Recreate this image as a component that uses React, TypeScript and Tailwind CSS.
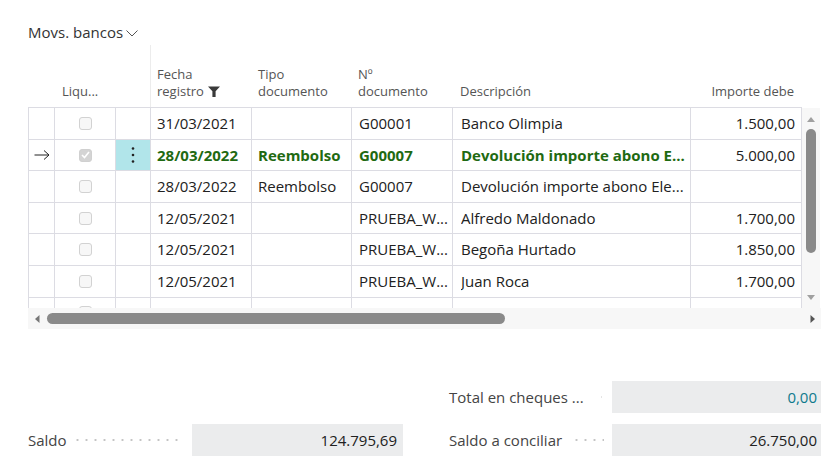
import React from 'react';

type Row = {
  arrow?: boolean;
  checked?: boolean;
  active?: boolean;
  fecha: string;
  tipo: string;
  doc: string;
  desc: string;
  importe: string;
  h: string;
};

const rows: Row[] = [
  { fecha: '31/03/2021', tipo: '', doc: 'G00001', desc: 'Banco Olimpia', importe: '1.500,00', h: 'h-[32px]' },
  { arrow: true, checked: true, active: true, fecha: '28/03/2022', tipo: 'Reembolso', doc: 'G00007', desc: 'Devolución importe abono E...', importe: '5.000,00', h: 'h-[31px]' },
  { fecha: '28/03/2022', tipo: 'Reembolso', doc: 'G00007', desc: 'Devolución importe abono Ele...', importe: '', h: 'h-[32px]' },
  { fecha: '12/05/2021', tipo: '', doc: 'PRUEBA_W...', desc: 'Alfredo Maldonado', importe: '1.700,00', h: 'h-[31px]' },
  { fecha: '12/05/2021', tipo: '', doc: 'PRUEBA_W...', desc: 'Begoña Hurtado', importe: '1.850,00', h: 'h-[32px]' },
  { fecha: '12/05/2021', tipo: '', doc: 'PRUEBA_W...', desc: 'Juan Roca', importe: '1.700,00', h: 'h-[32px]' },
];

const cols = 'grid grid-cols-[27px_61px_35px_101px_100px_101px_238px_111px]';
const cell = 'border-r border-b border-[#dcdce3] overflow-hidden whitespace-nowrap';

const Checkbox = ({ checked }: { checked?: boolean }) =>
  checked ? (
    <div className="w-[13px] h-[13px] rounded-[3px] bg-[#d4d4d4] border border-[#d0d0d0] flex items-center justify-center">
      <svg width="9" height="8" viewBox="0 0 9 8">
        <polyline points="1,4 3.5,6.5 8,1" fill="none" stroke="#fff" strokeWidth="1.6" />
      </svg>
    </div>
  ) : (
    <div className="w-[13px] h-[13px] rounded-[3px] bg-[#f7f7f7] border border-[#d2d2d2]" />
  );

const Dots = ({ width, className }: { width: string; className: string }) => (
  <div
    className={`${width} h-[4px] bg-[radial-gradient(circle,#c4c4c4_0.9px,transparent_1.3px)] bg-[length:9px_4px] bg-repeat-x ${className}`}
  />
);

export default function App() {
  return (
    <div className="w-[821px] h-[465px] bg-white overflow-hidden font-['Open_Sans',sans-serif] text-[#212121]">
      <div className="pt-[22px] pl-[28px] flex items-center gap-[3px] text-[15px] leading-[21px] text-[#333]">
        <span>Movs. bancos</span>
        <svg width="12" height="7" viewBox="0 0 12 7" className="mt-[2px]">
          <polyline points="0.5,0.5 6,6 11.5,0.5" fill="none" stroke="#555" strokeWidth="1" />
        </svg>
      </div>

      <div className="ml-[28px] mt-[2px] flex">
        <div className="w-[774px] h-[263px] overflow-hidden">
          <div className={`${cols} h-[63px] border-b border-[#dcdce3] text-[13px] leading-[17px] text-[#555]`}>
            <div />
            <div className="flex items-end pb-[7px] pl-[7px]">Liqu...</div>
            <div className="border-r border-[#ececec]" />
            <div className="flex items-end pb-[7px] pl-[6px]">
              <div>
                Fecha
                <br />
                <span className="inline-flex items-center gap-[4px]">
                  registro
                  <svg width="12" height="11" viewBox="0 0 12 11">
                    <path d="M0 0.5h12L7.6 5.2V11H4.4V5.2z" fill="#3a3a3a" />
                  </svg>
                </span>
              </div>
            </div>
            <div className="flex items-end pb-[7px] pl-[6px]">
              <div>
                Tipo
                <br />
                documento
              </div>
            </div>
            <div className="flex items-end pb-[7px] pl-[6px]">
              <div>
                Nº
                <br />
                documento
              </div>
            </div>
            <div className="flex items-end pb-[7px] pl-[7px]">Descripción</div>
            <div className="flex items-end justify-end pb-[7px] pr-[8px]">Importe debe</div>
          </div>

          {rows.map((r, i) => {
            const txt = r.active ? 'font-bold text-[#1f6a12]' : '';
            return (
              <div key={i} className={`${cols} ${r.h} text-[15px]`}>
                <div className={`${cell} border-l flex items-center justify-center`}>
                  {r.arrow && (
                    <svg width="16" height="10" viewBox="0 0 16 10">
                      <path d="M0.5 5H15M10 0.5L15 5L10 9.5" fill="none" stroke="#222" strokeWidth="1" />
                    </svg>
                  )}
                </div>
                <div className={`${cell} flex items-center justify-center`}>
                  <Checkbox checked={r.checked} />
                </div>
                <div className={`${cell} flex items-center justify-center ${r.active ? 'bg-[#b1e5ea]' : ''}`}>
                  {r.active && (
                    <svg width="4" height="18" viewBox="0 0 4 18">
                      <circle cx="2" cy="2.5" r="1.3" fill="#222" />
                      <circle cx="2" cy="9" r="1.3" fill="#222" />
                      <circle cx="2" cy="15.5" r="1.3" fill="#222" />
                    </svg>
                  )}
                </div>
                <div className={`${cell} flex items-center pl-[6px] ${txt}`}>{r.fecha}</div>
                <div className={`${cell} flex items-center pl-[6px] ${txt}`}>{r.tipo}</div>
                <div className={`${cell} flex items-center pl-[7px] ${txt}`}>{r.doc}</div>
                <div className={`${cell} flex items-center pl-[8px] ${txt}`}>
                  <span className="truncate">{r.desc}</span>
                </div>
                <div className={`${cell} flex items-center justify-end pr-[6px]`}>{r.importe}</div>
              </div>
            );
          })}

          <div className={`${cols} h-[20px]`}>
            <div className={`${cell} border-l`} />
            <div className={`${cell} flex justify-center pt-[8px]`}>
              <Checkbox />
            </div>
            <div className={cell} />
            <div className={cell} />
            <div className={cell} />
            <div className={cell} />
            <div className={cell} />
            <div className={cell} />
          </div>
        </div>

        <div className="w-[18px] mt-[63px] h-[200px] bg-[#f7f7f7] flex flex-col items-center">
          <svg width="10" height="6" viewBox="0 0 10 6" className="mt-[8px]">
            <path d="M1 6L5 1L9 6z" fill="#a0a0a0" />
          </svg>
          <div className="w-[10px] h-[124px] mt-[7px] rounded-full bg-[#8a8a8a]" />
          <div className="flex-1" />
          <svg width="10" height="6" viewBox="0 0 10 6" className="mb-[7px]">
            <path d="M1 0L5 5L9 0z" fill="#a0a0a0" />
          </svg>
        </div>
      </div>

      <div className="ml-[28px] w-[793px] h-[21px] bg-[#f7f7f7] flex items-center">
        <svg width="6" height="10" viewBox="0 0 6 10" className="ml-[6px]">
          <path d="M5.5 1L1 5L5.5 9z" fill="#777" />
        </svg>
        <div className="ml-[7px] w-[458px] h-[11px] rounded-full bg-[#8a8a8a]" />
        <div className="flex-1" />
        <svg width="6" height="10" viewBox="0 0 6 10" className="mr-[5px]">
          <path d="M0.5 1L5 5L0.5 9z" fill="#555" />
        </svg>
      </div>

      <div className="mt-[52px] flex text-[15px] text-[#444]">
        <div className="w-[375px] ml-[28px] flex flex-col">
          <div className="h-[32px]" />
          <div className="mt-[11px] h-[32px] flex items-center">
            <span>Saldo</span>
            <Dots width="flex-1" className="ml-[6px] mr-[8px]" />
            <div className="w-[211px] h-[32px] bg-[#ebeced] flex items-center justify-end pr-[6px] text-[#212121]">
              124.795,69
            </div>
          </div>
        </div>
        <div className="w-[372px] ml-[46px] flex flex-col">
          <div className="h-[32px] flex items-center">
            <span>Total en cheques ...</span>
            <div className="flex-1 flex justify-end pr-[10px]">
              <Dots width="w-[4px]" className="" />
            </div>
            <div className="w-[209px] h-[32px] bg-[#ebeced] flex items-center justify-end pr-[4px] text-[#0e7a8c]">
              0,00
            </div>
          </div>
          <div className="mt-[11px] h-[32px] flex items-center">
            <span>Saldo a conciliar</span>
            <div className="flex-1 flex justify-end pr-[8px]">
              <Dots width="w-[32px]" className="" />
            </div>
            <div className="w-[209px] h-[32px] bg-[#ebeced] flex items-center justify-end pr-[4px] text-[#212121]">
              26.750,00
            </div>
          </div>
        </div>
      </div>
    </div>
  );
}
